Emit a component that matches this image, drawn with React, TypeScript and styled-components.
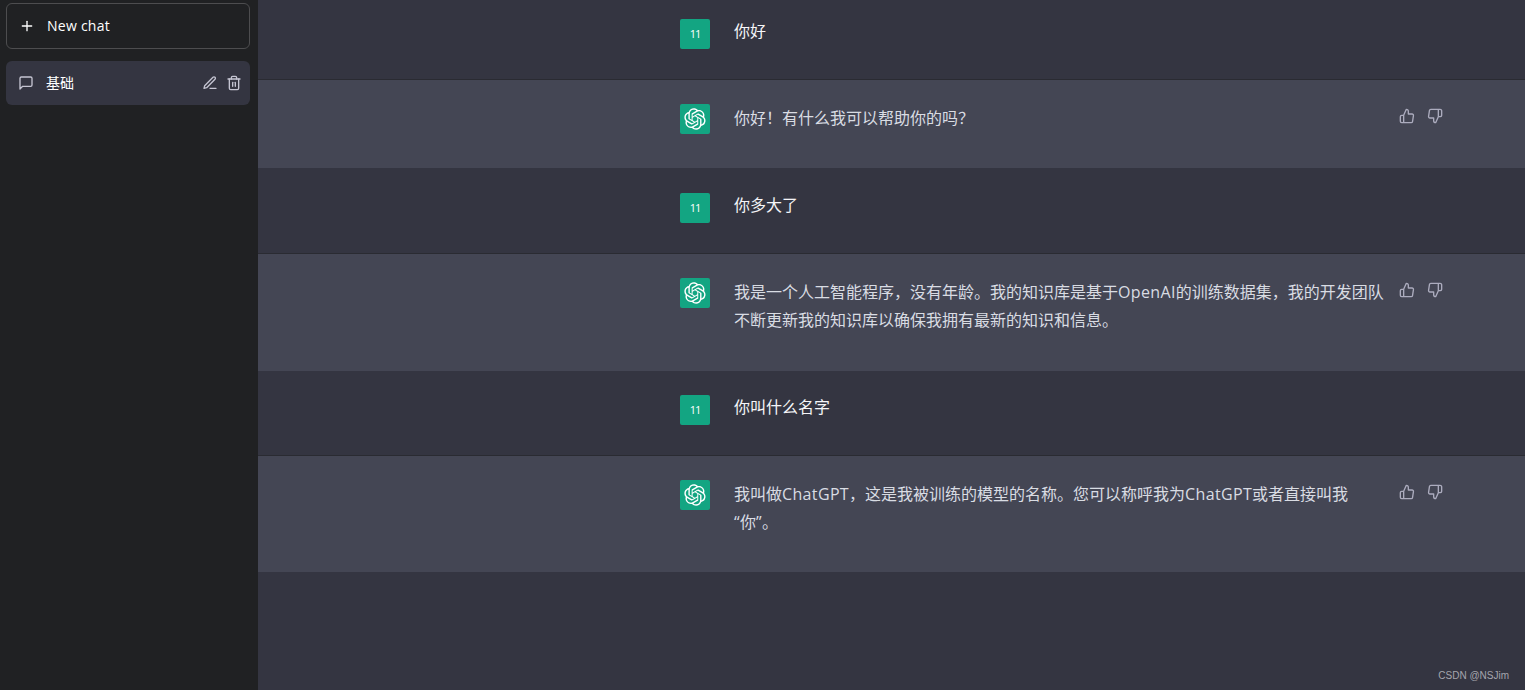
import React from "react";
import styled, { createGlobalStyle } from "styled-components";
import { FiPlus, FiMessageSquare, FiEdit3, FiTrash2, FiThumbsUp, FiThumbsDown } from "react-icons/fi";

const Global = createGlobalStyle`
  html, body { margin: 0; padding: 0; background: #343541; }
  body { font-family: "Noto Sans CJK SC", sans-serif; }
`;
const Page = styled.div`
  display: flex;
  height: 690px;
  width: 1525px;
  overflow: hidden;
  position: relative;
`;
const Sidebar = styled.aside`
  width: 258px;
  flex: none;
  background: #202123;
  padding: 3px 8px 0 6px;
  box-sizing: border-box;
  display: flex;
  flex-direction: column;
  gap: 12px;
`;
const NewChat = styled.button`
  display: flex;
  align-items: center;
  gap: 12px;
  height: 46px;
  padding: 0 12px;
  background: transparent;
  border: 1px solid #4d4d4f;
  border-radius: 6px;
  color: #fff;
  font: 14px/20px "Open Sans", "Noto Sans", sans-serif;
  letter-spacing: 0.25px;
`;
const ChatItem = styled.div`
  display: flex;
  align-items: center;
  gap: 12px;
  height: 44px;
  padding: 0 8px 0 12px;
  background: #343541;
  border-radius: 6px;
  color: #c5c5d2;
`;
const ChatTitle = styled.span`
  flex: 1;
  font-size: 14px;
  line-height: 18px;
  margin-top: -2px;
  color: #fff;
`;
const ItemActions = styled.div`
  display: flex;
  gap: 8px;
  color: #c5c5d2;
`;
const Main = styled.main`
  flex: 1;
  display: flex;
  flex-direction: column;
`;
const Row = styled.section<{ $bot?: boolean; $h: number; $top: number }>`
  height: ${(p) => p.$h}px;
  box-sizing: border-box;
  flex: none;
  padding: ${(p) => p.$top}px 0 0 422px;
  display: flex;
  background: ${(p) => (p.$bot ? "#444654" : "#343541")};
  border-bottom: ${(p) => (p.$bot ? "0" : "1px solid #2a2b32")};
`;
const Avatar = styled.div<{ $bot?: boolean }>`
  width: 30px;
  height: 30px;
  flex: none;
  box-sizing: border-box;
  padding-bottom: ${(p) => (p.$bot ? "0" : "2px")};
  border-radius: 2px;
  background: #13a582;
  color: #fff;
  display: flex;
  align-items: center;
  justify-content: center;
  font: 500 11px "Open Sans", sans-serif;
  letter-spacing: -1px;
`;
const Text = styled.div<{ $bot?: boolean }>`
  width: 652px;
  margin: ${(p) => (p.$bot ? "-1px" : "-3px")} 0 0 24px;
  flex: none;
  font: 16px/28px "Noto Sans CJK SC", sans-serif;
  color: ${(p) => (p.$bot ? "#d9dce3" : "#f5f5f8")};
`;
const Latin = styled.span`
  font-family: "Open Sans", sans-serif;
  line-height: 1;
  letter-spacing: 0.35px;
`;
const Votes = styled.div`
  display: flex;
  gap: 12px;
  margin: 4px 0 0 13px;
  height: 16px;
  color: #acacbe;
`;
const Watermark = styled.div`
  position: absolute;
  right: 16px;
  bottom: 8px;
  font: 10px/12px "Liberation Sans", Arial, sans-serif;
  color: #a5a5ad;
`;
const Logo = () => (
  <svg width="22" height="22" viewBox="0 0 41 41" fill="none">
    <path
      fill="#fff"
      d="M37.5324 16.8707C37.9808 15.5241 38.1363 14.0974 37.9886 12.6859C37.8409 11.2744 37.3934 9.91076 36.676 8.68622C35.6126 6.83404 33.9882 5.3676 32.0373 4.4985C30.0864 3.62941 27.9098 3.40259 25.8215 3.85078C24.8796 2.7893 23.7219 1.94125 22.4257 1.36341C21.1295 0.785575 19.7249 0.491269 18.3058 0.500197C16.1708 0.495044 14.0893 1.16803 12.3614 2.42214C10.6335 3.67624 9.34853 5.44666 8.6917 7.47815C7.30085 7.76286 5.98686 8.3414 4.8377 9.17505C3.68854 10.0087 2.73073 11.0782 2.02839 12.312C0.956464 14.1591 0.498905 16.2988 0.721698 18.4228C0.944492 20.5467 1.83612 22.5449 3.268 24.1293C2.81966 25.4759 2.66413 26.9026 2.81182 28.3141C2.95951 29.7256 3.40701 31.0892 4.12437 32.3138C5.18791 34.1659 6.8123 35.6322 8.76321 36.5013C10.7141 37.3704 12.8907 37.5973 14.9789 37.1492C15.9208 38.2107 17.0786 39.0587 18.3747 39.6366C19.6709 40.2144 21.0755 40.5087 22.4946 40.4998C24.6307 40.5054 26.7133 39.8321 28.4418 38.5772C30.1704 37.3223 31.4556 35.5506 32.1119 33.5179C33.5027 33.2332 34.8167 32.6547 35.9659 31.821C37.115 30.9874 38.0728 29.9178 38.7752 28.684C39.8458 26.8371 40.3023 24.6979 40.0789 22.5748C39.8556 20.4517 38.9639 18.4544 37.5324 16.8707ZM22.4978 37.8849C20.7443 37.8874 19.0459 37.2733 17.6994 36.1501C17.7601 36.117 17.8666 36.0586 17.936 36.0161L25.9004 31.4156C26.1003 31.3019 26.2663 31.137 26.3813 30.9378C26.4964 30.7386 26.5563 30.5124 26.5549 30.2825V19.0542L29.9213 20.998C29.9389 21.0068 29.9541 21.0198 29.9656 21.0359C29.977 21.052 29.9842 21.0707 29.9867 21.0902V30.3889C29.9842 32.375 29.1946 34.2791 27.7909 35.6841C26.3872 37.0892 24.4838 37.8806 22.4978 37.8849ZM6.39227 31.0064C5.51397 29.4888 5.19742 27.7107 5.49804 25.9832C5.55718 26.0187 5.66048 26.0818 5.73461 26.1244L13.699 30.7248C13.8975 30.8408 14.1233 30.902 14.3532 30.902C14.583 30.902 14.8088 30.8408 15.0073 30.7248L24.731 25.1103V28.9979C24.7321 29.0177 24.7283 29.0376 24.7199 29.0556C24.7115 29.0736 24.6988 29.0893 24.6829 29.1012L16.6317 33.7497C14.9096 34.7416 12.8643 35.0097 10.9447 34.4954C9.02506 33.9811 7.38785 32.7263 6.39227 31.0064ZM4.29707 13.6194C5.17156 12.0998 6.55279 10.9364 8.19885 10.3327C8.19885 10.4013 8.19491 10.5228 8.19491 10.6071V19.808C8.19351 20.0378 8.25334 20.2638 8.36823 20.4629C8.48312 20.6619 8.64893 20.8267 8.84863 20.9404L18.5723 26.5542L15.206 28.4979C15.1894 28.5089 15.1703 28.5155 15.1505 28.5173C15.1307 28.5191 15.1107 28.516 15.0924 28.5082L7.04046 23.8557C5.32135 22.8601 4.06716 21.2235 3.55289 19.3046C3.03862 17.3858 3.30624 15.3413 4.29707 13.6194ZM31.955 20.0556L22.2312 14.4411L25.5976 12.4981C25.6142 12.4872 25.6333 12.4805 25.6531 12.4787C25.6729 12.4769 25.6928 12.4801 25.7111 12.4879L33.7631 17.1364C34.9967 17.849 36.0017 18.8982 36.6606 20.1613C37.3194 21.4244 37.6047 22.849 37.4832 24.2684C37.3617 25.6878 36.8382 27.0432 35.9743 28.1759C35.1103 29.3086 33.9415 30.1717 32.6047 30.6641C32.6047 30.5947 32.6047 30.4733 32.6047 30.3889V21.188C32.6066 20.9586 32.5474 20.7328 32.4332 20.5338C32.319 20.3348 32.154 20.1698 31.955 20.0556ZM35.3055 15.0128C35.2464 14.9765 35.1431 14.9142 35.069 14.8717L27.1045 10.2712C26.906 10.1554 26.6803 10.0943 26.4504 10.0943C26.2206 10.0943 25.9948 10.1554 25.7963 10.2712L16.0726 15.8858V11.9982C16.0715 11.9783 16.0753 11.9585 16.0837 11.9405C16.0921 11.9225 16.1048 11.9068 16.1207 11.8949L24.1719 7.25025C25.4053 6.53903 26.8158 6.19376 28.2383 6.25482C29.6608 6.31589 31.0364 6.78077 32.2044 7.59508C33.3723 8.40939 34.2842 9.53945 34.8334 10.8531C35.3826 12.1667 35.5464 13.6095 35.3055 15.0128ZM14.2424 21.9419L10.8752 19.9981C10.8576 19.9893 10.8423 19.9763 10.8309 19.9602C10.8195 19.9441 10.8122 19.9254 10.8098 19.9058V10.6071C10.8107 9.18295 11.2173 7.78848 11.9819 6.58696C12.7466 5.38544 13.8377 4.42659 15.1275 3.82264C16.4173 3.21869 17.8524 2.99464 19.2649 3.1767C20.6775 3.35876 22.0089 3.93941 23.1034 4.85067C23.0427 4.88379 22.937 4.94215 22.8668 4.98473L14.9024 9.58517C14.7025 9.69878 14.5366 9.86356 14.4215 10.0626C14.3065 10.2616 14.2466 10.4877 14.2479 10.7175L14.2424 21.9419ZM16.071 17.9991L20.4018 15.4978L24.7325 17.9975V22.9985L20.4018 25.4983L16.071 22.9985V17.9991Z"
    />
  </svg>
);

const rows = [
  { h: 80, top: 19, text: ["你好"] },
  { bot: true, h: 88, top: 24, text: ["你好！有什么我可以帮助你的吗？"] },
  { h: 86, top: 25, text: ["你多大了"] },
  {
    bot: true,
    h: 117,
    top: 24,
    text: ["我是一个人工智能程序，没有年龄。我的知识库是基于", "OpenAI", "的训练数据集，我的开发团队不断更新我的知识库以确保我拥有最新的知识和信息。"],
  },
  { h: 85, top: 24, text: ["你叫什么名字"] },
  {
    bot: true,
    h: 116,
    top: 24,
    text: ["我叫做", "ChatGPT", "，这是我被训练的模型的名称。您可以称呼我为", "ChatGPT", "或者直接叫我", "“", "你", "”", "。"],
  },
];

const isLatin = (s: string) => /^[A-Za-z“”]+$/.test(s);

export default function App() {
  return (
    <Page>
      <Global />
      <Sidebar>
        <NewChat>
          <FiPlus size={16} />
          New chat
        </NewChat>
        <ChatItem>
          <FiMessageSquare size={16} />
          <ChatTitle>基础</ChatTitle>
          <ItemActions>
            <FiEdit3 size={16} />
            <FiTrash2 size={16} />
          </ItemActions>
        </ChatItem>
      </Sidebar>
      <Main>
        {rows.map((r, i) => (
          <Row key={i} $bot={r.bot} $h={r.h} $top={r.top}>
            <Avatar $bot={r.bot}>{r.bot ? <Logo /> : "11"}</Avatar>
            <Text $bot={r.bot}>
              {r.text.map((t, j) => (
                <React.Fragment key={j}>
                  {t === "“" && <wbr />}
                  {isLatin(t) ? <Latin>{t}</Latin> : t}
                </React.Fragment>
              ))}
            </Text>
            {r.bot && (
              <Votes>
                <FiThumbsUp size={16} />
                <FiThumbsDown size={16} />
              </Votes>
            )}
          </Row>
        ))}
      </Main>
      <Watermark>CSDN @NSJim</Watermark>
    </Page>
  );
}
